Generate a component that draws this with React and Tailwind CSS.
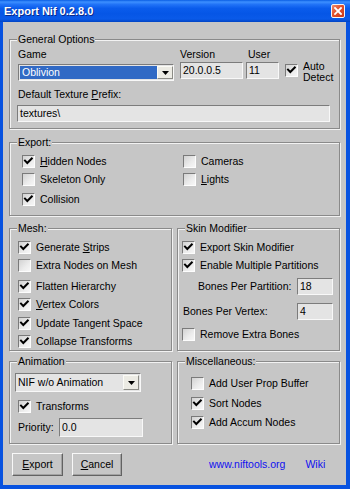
import React from "react";

const GRAY = "bg-[#c6c6c6]";

function Group({ label, className = "", children }) {
  return (
    <div
      className={`relative border border-[#8a8a8a] shadow-[inset_1px_1px_0_#f2f2f2,1px_1px_0_#f2f2f2] ${className}`}
    >
      <span className={`absolute left-[7px] -top-[7px] ${GRAY} px-[1px] leading-[13px] whitespace-nowrap`}>
        {label}
      </span>
      {children}
    </div>
  );
}

function Box({ checked }) {
  return (
    <span className="flex h-[13px] w-[13px] shrink-0 items-center justify-center border border-[#fdfdfd] border-t-[#7a7a7a] border-l-[#7a7a7a] bg-[linear-gradient(135deg,#d2d2d2_0%,#ececec_60%,#f7f7f7_100%)]">
      {checked && (
        <svg width="11" height="11" viewBox="0 0 11 11">
          <polyline points="2,4.6 4.3,7 8.8,2.4" fill="none" stroke="#000" strokeWidth="2" strokeLinecap="square" />
        </svg>
      )}
    </span>
  );
}

function Check({ checked, children, className = "" }) {
  return (
    <div className={`flex h-[13px] items-center gap-[5px] ${className}`}>
      <Box checked={checked} />
      <span className="leading-[13px] whitespace-nowrap">{children}</span>
    </div>
  );
}

function TextBox({ value, className = "" }) {
  return (
    <div
      className={`flex items-center border border-[#f8f8f8] border-t-[#7c7c7c] border-l-[#7c7c7c] bg-[#e4e4e4] pl-[2px] leading-[13px] whitespace-nowrap ${className}`}
    >
      {value}
    </div>
  );
}

function Arrow() {
  return (
    <span className="flex w-[16px] shrink-0 items-center justify-center border border-[#fbfbf6] border-b-[#8c8c86] border-r-[#8c8c86] bg-[#ecebe4]">
      <svg width="7" height="4" viewBox="0 0 7 4">
        <polygon points="0,0 7,0 3.5,4" fill="#000" />
      </svg>
    </span>
  );
}

export default function App() {
  return (
    <div className="flex h-[489px] w-[350px] flex-col bg-[#0752e0] font-['Liberation_Sans',Arial,sans-serif] text-[10.5px] text-black">
      {/* Title bar */}
      <div className="flex h-[22px] shrink-0 items-center justify-between bg-[linear-gradient(180deg,#0a5ee4_0%,#3d90ff_9%,#2173f7_20%,#0a5cec_38%,#0656e6_62%,#0a5ae9_86%,#0044c4_100%)] pl-[4px] pr-[5px]">
        <span className="text-[11px] font-bold leading-[14px] text-white [text-shadow:1px_1px_0_#0a2a8a]">
          Export Nif 0.2.8.0
        </span>
        <span className="flex h-[14px] w-[14px] items-center justify-center rounded-[2px] border border-[#f4f4f4] bg-[linear-gradient(135deg,#ee8a6e_0%,#e2512c_45%,#c8391a_100%)]">
          <svg width="8" height="8" viewBox="0 0 8 8">
            <path d="M1 1 L7 7 M7 1 L1 7" stroke="#fff" strokeWidth="1.8" strokeLinecap="square" />
          </svg>
        </span>
      </div>

      {/* Client */}
      <div className="flex flex-1 pl-[3px] pr-[4px] pb-[4px]">
        <div className={`flex flex-1 flex-col ${GRAY}`}>
          {/* General Options */}
          <Group label="General Options" className="ml-[6px] mt-[17px] h-[90px] w-[331px]">
            <div className="pl-[8px] pt-[8px]">
              <div className="flex items-start">
                <div className="w-[156px]">
                  <div className="leading-[13px]">Game</div>
                  <div className="mt-[3px] flex h-[17px] w-[156px] border border-[#f8f8f8] border-t-[#7c7c7c] border-l-[#7c7c7c] bg-[#e4e4e4] p-[1px] pr-0">
                    <div className="flex flex-1 items-center bg-[#316ac5] pl-[2px] leading-[13px] text-white">Oblivion</div>
                    <Arrow />
                  </div>
                </div>
                <div className="ml-[6px] w-[63px]">
                  <div className="leading-[13px]">Version</div>
                  <TextBox value="20.0.0.5" className="mt-[1px] h-[17px] w-[63px]" />
                </div>
                <div className="ml-[3px] w-[33px]">
                  <div className="pl-[2px] leading-[13px]">User</div>
                  <TextBox value="11" className="mt-[1px] h-[17px] w-[33px]" />
                </div>
                <div className="ml-[6px] flex items-start gap-[5px]">
                  <div className="mt-[16px]">
                    <Box checked />
                  </div>
                  <div className="mt-[13px] leading-[11px]">
                    <div>Auto</div>
                    <div>Detect</div>
                  </div>
                </div>
              </div>
              <div className="mt-[5px] leading-[13px]">
                Default Texture <u className="underline-offset-1">P</u>refix:
              </div>
              <TextBox value="textures\" className="-ml-[1px] mt-[4px] h-[17px] w-[313px]" />
            </div>
          </Group>

          {/* Export */}
          <Group label="Export:" className="ml-[6px] mt-[13px] h-[74px] w-[331px]">
            <div className="flex pl-[12px] pt-[12px]">
              <div className="w-[161px]">
                <Check checked>
                  <u className="underline-offset-1">H</u>idden Nodes
                </Check>
                <Check className="mt-[5px]">Skeleton Only</Check>
                <Check checked className="mt-[7px]">
                  Collision
                </Check>
              </div>
              <div>
                <Check>Cameras</Check>
                <Check className="mt-[5px]">
                  <u className="underline-offset-1">L</u>ights
                </Check>
              </div>
            </div>
          </Group>

          {/* Mesh / Skin */}
          <div className="ml-[6px] mt-[12px] flex gap-[5px]">
            <Group label="Mesh:" className="h-[123px] w-[163px]">
              <div className="pl-[8px] pt-[12px]">
                <Check checked>
                  Generate <u className="underline-offset-1">S</u>trips
                </Check>
                <Check className="mt-[5px]">Extra Nodes on Mesh</Check>
                <Check checked className="mt-[8px]">
                  Flatten Hierarchy
                </Check>
                <Check checked className="mt-[5px]">
                  <u className="underline-offset-1">V</u>ertex Colors
                </Check>
                <Check checked className="mt-[6px]">
                  Update Tangent Space
                </Check>
                <Check checked className="mt-[5px]">
                  Collapse Transforms
                </Check>
              </div>
            </Group>
            <Group label="Skin Modifier" className="h-[123px] w-[163px]">
              <div className="pl-[4px] pr-[6px] pt-[12px]">
                <Check checked>Export Skin Modifier</Check>
                <Check checked className="mt-[5px]">
                  Enable Multiple Partitions
                </Check>
                <div className="mt-[6px] flex h-[17px] items-center">
                  <span className="pl-[16px] leading-[13px]">Bones Per Partition:</span>
                  <TextBox value="18" className="ml-auto h-[17px] w-[36px]" />
                </div>
                <div className="mt-[8px] flex h-[17px] items-center">
                  <span className="pl-[1px] leading-[13px]">Bones Per Vertex:</span>
                  <TextBox value="4" className="ml-auto h-[17px] w-[36px]" />
                </div>
                <Check className="mt-[8px]">Remove Extra Bones</Check>
              </div>
            </Group>
          </div>

          {/* Animation / Misc */}
          <div className="ml-[6px] mt-[10px] flex gap-[5px]">
            <Group label="Animation" className="h-[83px] w-[163px]">
              <div className="pl-[5px] pt-[11px]">
                <div className="flex h-[19px] w-[126px] border border-[#f8f8f8] border-t-[#7c7c7c] border-l-[#7c7c7c] bg-[#e4e4e4] py-[1px] pr-[1px]">
                  <div className="flex flex-1 items-center pl-[2px] leading-[13px]">NIF w/o Animation</div>
                  <Arrow />
                </div>
                <Check checked className="ml-[3px] mt-[8px]">
                  Transforms
                </Check>
                <div className="ml-[3px] mt-[5px] flex items-center">
                  <span className="w-[41px] leading-[13px]">Priority:</span>
                  <TextBox value="0.0" className="h-[19px] w-[84px]" />
                </div>
              </div>
            </Group>
            <Group label="Miscellaneous:" className="h-[83px] w-[163px]">
              <div className="pl-[13px] pt-[15px]">
                <Check>Add User Prop Buffer</Check>
                <Check checked className="mt-[7px]">
                  Sort Nodes
                </Check>
                <Check checked className="mt-[6px]">
                  Add Accum Nodes
                </Check>
              </div>
            </Group>
          </div>

          {/* Buttons */}
          <div className="ml-[9px] mt-[9px] flex h-[23px] items-center">
            <button className="flex h-[23px] w-[51px] items-center justify-center border border-[#f8f8f8] border-b-[#626262] border-r-[#626262] shadow-[inset_-1px_-1px_0_#a2a2a2] leading-[13px]">
              <span>
                <u className="underline-offset-1">E</u>xport
              </span>
            </button>
            <button className="ml-[9px] flex h-[23px] w-[50px] items-center justify-center border border-[#f8f8f8] border-b-[#626262] border-r-[#626262] shadow-[inset_-1px_-1px_0_#a2a2a2] leading-[13px]">
              <span>
                <u className="underline-offset-1">C</u>ancel
              </span>
            </button>
            <span className="ml-[87px] leading-[13px] text-[#1010f0]">www.niftools.org</span>
            <span className="ml-[20px] leading-[13px] text-[#1010f0]">Wiki</span>
          </div>
        </div>
      </div>
    </div>
  );
}
